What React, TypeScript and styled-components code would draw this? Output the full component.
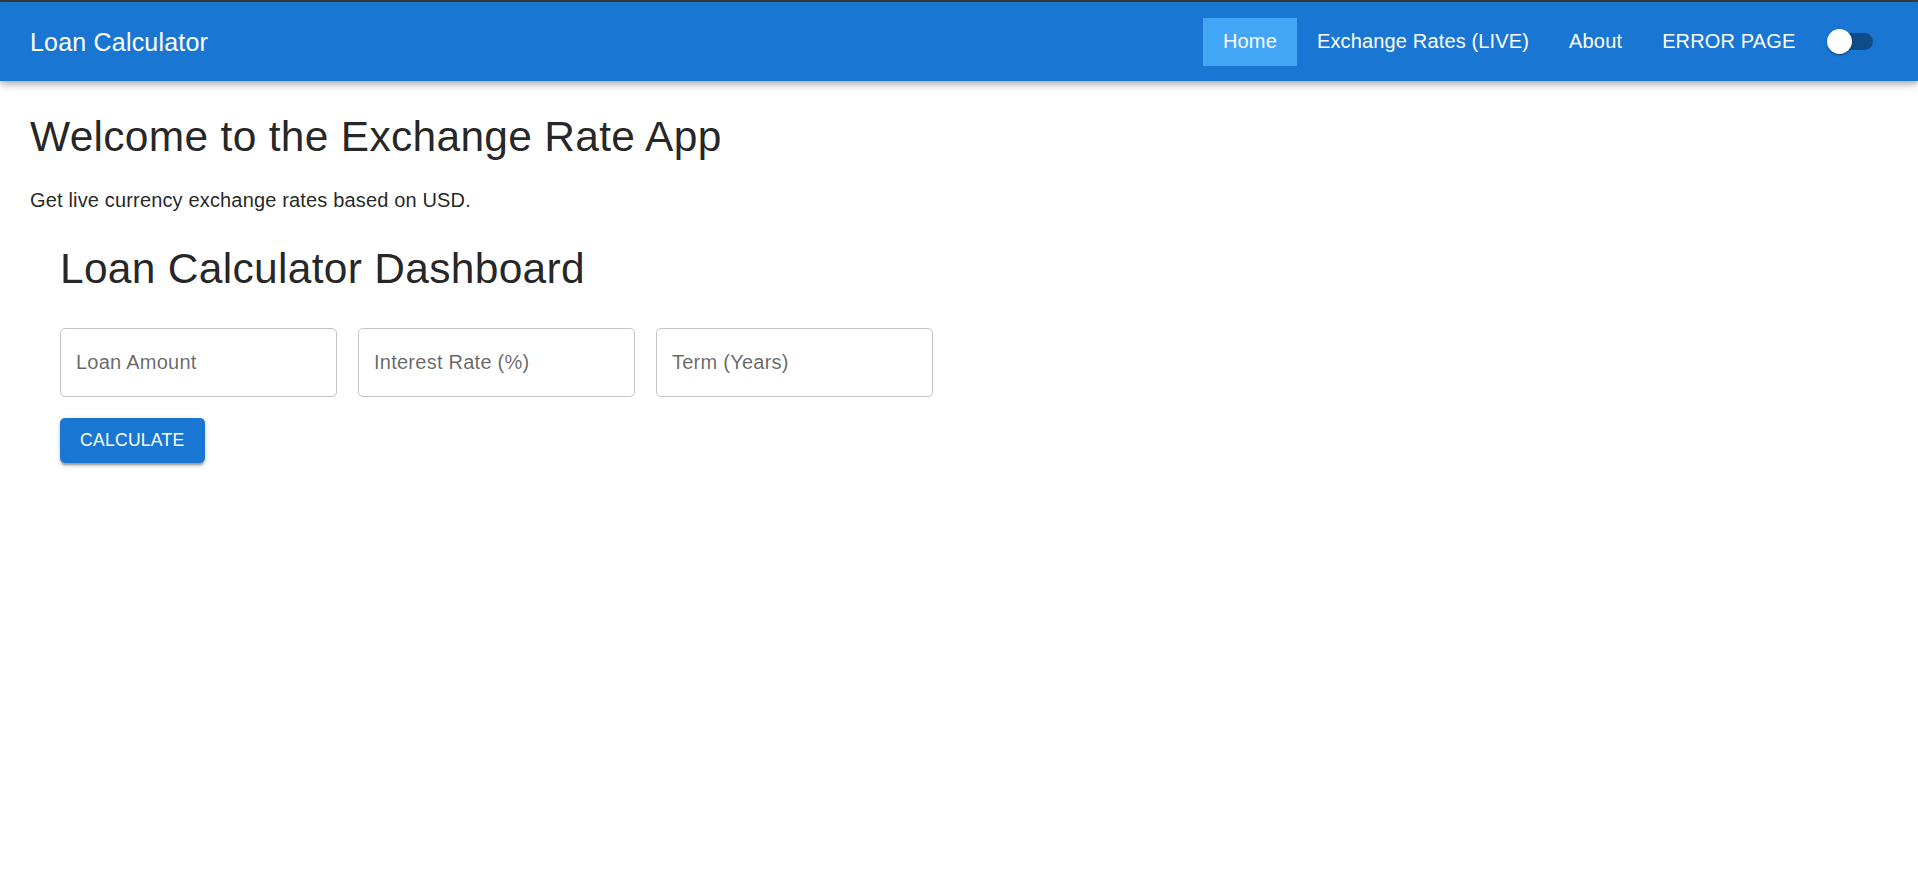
import React from "react";
import styled, { createGlobalStyle } from "styled-components";

const GlobalStyle = createGlobalStyle`
  html, body {
    margin: 0;
    padding: 0;
    background: #ffffff;
  }
  body {
    font-family: "Liberation Sans", Arial, sans-serif;
    color: rgba(0, 0, 0, 0.87);
    min-height: 870px;
  }
  * { box-sizing: border-box; }
`;

const Page = styled.div`
  display: flex;
  flex-direction: column;
  min-height: 870px;
`;

const TopStrip = styled.div`
  height: 2px;
  background: #3a3a3a;
`;

const AppBar = styled.header`
  position: relative;
  z-index: 1;
  height: 79px;
  display: flex;
  align-items: center;
  padding: 0 30px;
  background: #1976d2;
  color: #ffffff;
  box-shadow: 0px 2.5px 5px -1.25px rgba(0, 0, 0, 0.2),
    0px 5px 6px 0px rgba(0, 0, 0, 0.14), 0px 1.25px 12.5px 0px rgba(0, 0, 0, 0.12);
`;

const Brand = styled.div`
  flex: 1;
  font-size: 25px;
  line-height: 40px;
  font-weight: 400;
  letter-spacing: 0.2px;
  padding-top: 1px;
`;

const Nav = styled.nav`
  display: flex;
  align-items: center;
`;

const NavButton = styled.button<{ $active?: boolean }>`
  height: 48px;
  padding: 0 20px;
  display: flex;
  align-items: center;
  border: none;
  border-radius: 0;
  background: ${(p) => (p.$active ? "#42a5f5" : "transparent")};
  color: #ffffff;
  font-family: "Liberation Sans", Arial, sans-serif;
  font-size: 20px;
  font-weight: 400;
  letter-spacing: 0.15px;
  cursor: pointer;
`;

const SwitchRoot = styled.span`
  position: relative;
  display: inline-flex;
  width: 72.5px;
  height: 47.5px;
  padding: 15px;
  flex-shrink: 0;
`;

const SwitchTrack = styled.span`
  width: 100%;
  height: 100%;
  border-radius: 8.75px;
  background: #0f4c88;
`;

const SwitchThumb = styled.span`
  position: absolute;
  left: 11.25px;
  top: 11.25px;
  width: 25px;
  height: 25px;
  border-radius: 50%;
  background: #ffffff;
  box-shadow: 0px 2.5px 1.25px -1.25px rgba(0, 0, 0, 0.2),
    0px 1.25px 1.25px 0px rgba(0, 0, 0, 0.14), 0px 1.25px 3.75px 0px rgba(0, 0, 0, 0.12);
`;

const Main = styled.main`
  padding: 30px;
`;

const PageTitle = styled.h1<{ $gap: number }>`
  margin: 0 0 ${(p) => p.$gap}px;
  font-size: 42.5px;
  line-height: 52.5px;
  font-weight: 400;
  letter-spacing: 0.3px;
  color: rgba(0, 0, 0, 0.87);
`;

const Lead = styled.p`
  margin: 0;
  font-size: 20px;
  line-height: 30px;
  letter-spacing: 0.16px;
`;

const Dashboard = styled.section`
  padding: 28px 30px 30px;
`;

const FieldRow = styled.div`
  display: flex;
  gap: 21px;
`;

const Field = styled.input`
  width: 277px;
  height: 69px;
  padding: 0 15px;
  border: 1px solid #c4c4c4;
  border-radius: 5px;
  background: #ffffff;
  font-family: "Liberation Sans", Arial, sans-serif;
  font-size: 20px;
  letter-spacing: 0.25px;
  color: rgba(0, 0, 0, 0.87);
  outline: none;
  &::placeholder {
    color: rgba(0, 0, 0, 0.6);
    opacity: 1;
  }
`;

const Actions = styled.div`
  display: flex;
  margin-top: 21px;
`;

const PrimaryButton = styled.button`
  height: 45.5px;
  padding: 0 20px;
  border: none;
  border-radius: 5px;
  background: #1976d2;
  color: #ffffff;
  font-family: "Liberation Sans", Arial, sans-serif;
  font-size: 17.5px;
  font-weight: 400;
  letter-spacing: 0.3px;
  text-transform: uppercase;
  cursor: pointer;
  box-shadow: 0px 3.75px 1.25px -2.5px rgba(0, 0, 0, 0.2),
    0px 2.5px 2.5px 0px rgba(0, 0, 0, 0.14), 0px 1.25px 6.25px 0px rgba(0, 0, 0, 0.12);
`;

const navItems = [
  { label: "Home", active: true },
  { label: "Exchange Rates (LIVE)" },
  { label: "About" },
  { label: "ERROR PAGE" },
];

export default function App() {
  return (
    <Page>
      <GlobalStyle />
      <TopStrip />
      <AppBar>
        <Brand>Loan Calculator</Brand>
        <Nav>
          {navItems.map((item) => (
            <NavButton key={item.label} $active={item.active}>
              {item.label}
            </NavButton>
          ))}
          <SwitchRoot>
            <SwitchTrack />
            <SwitchThumb />
          </SwitchRoot>
        </Nav>
      </AppBar>
      <Main>
        <PageTitle $gap={21}>Welcome to the Exchange Rate App</PageTitle>
        <Lead>Get live currency exchange rates based on USD.</Lead>
        <Dashboard>
          <PageTitle as="h2" $gap={32.5}>
            Loan Calculator Dashboard
          </PageTitle>
          <FieldRow>
            <Field placeholder="Loan Amount" />
            <Field placeholder="Interest Rate (%)" />
            <Field placeholder="Term (Years)" />
          </FieldRow>
          <Actions>
            <PrimaryButton>Calculate</PrimaryButton>
          </Actions>
        </Dashboard>
      </Main>
    </Page>
  );
}
